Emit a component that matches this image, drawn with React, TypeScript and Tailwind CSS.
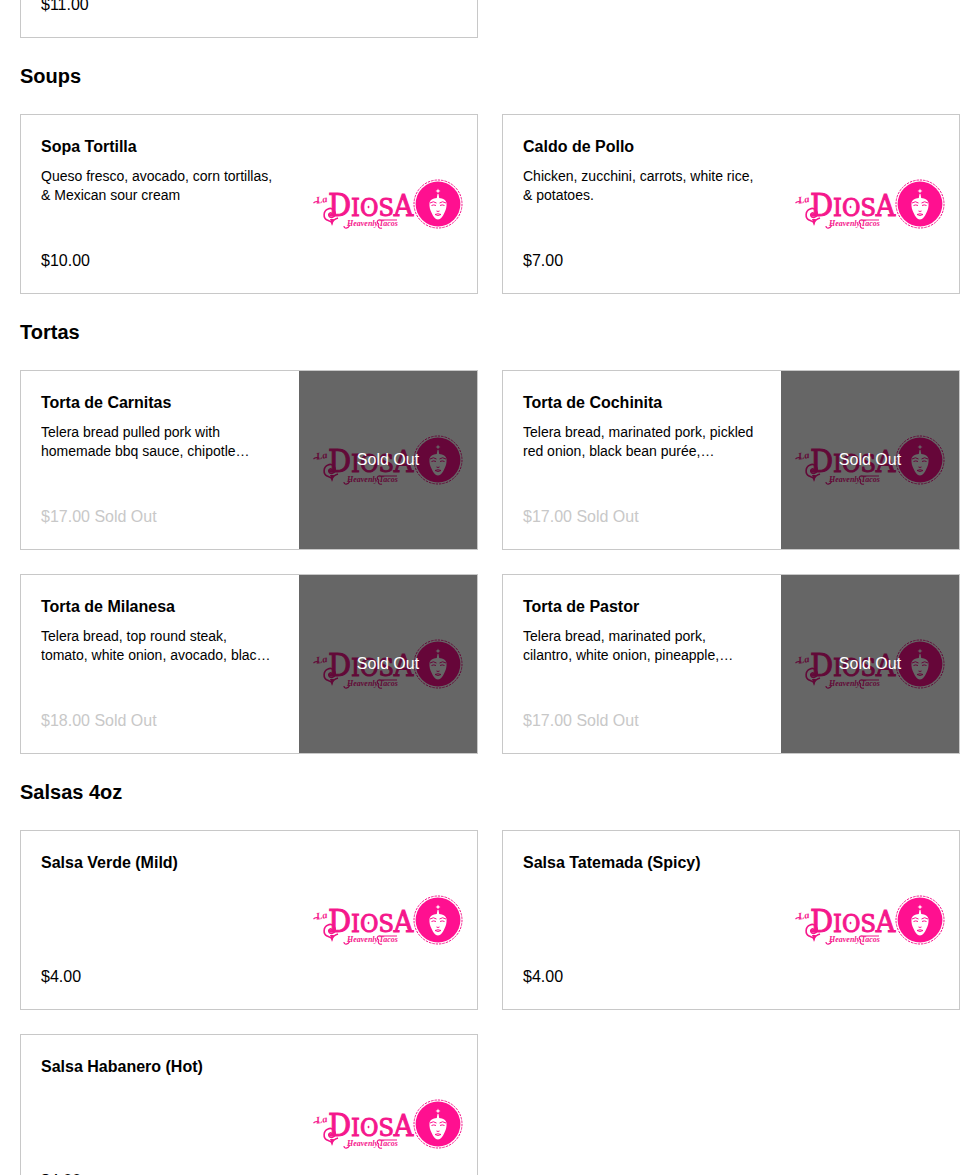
type MenuItem = {
  name: string;
  description?: string;
  price: string;
  soldOut?: boolean;
};

type MenuSection = {
  title: string;
  items: MenuItem[];
};

const sections: MenuSection[] = [
  {
    title: "Soups",
    items: [
      {
        name: "Sopa Tortilla",
        description: "Queso fresco, avocado, corn tortillas,\n& Mexican sour cream",
        price: "$10.00",
      },
      {
        name: "Caldo de Pollo",
        description: "Chicken, zucchini, carrots, white rice,\n& potatoes.",
        price: "$7.00",
      },
    ],
  },
  {
    title: "Tortas",
    items: [
      {
        name: "Torta de Carnitas",
        description: "Telera bread pulled pork with\nhomemade bbq sauce, chipotle…",
        price: "$17.00",
        soldOut: true,
      },
      {
        name: "Torta de Cochinita",
        description: "Telera bread, marinated pork, pickled\nred onion, black bean purée,…",
        price: "$17.00",
        soldOut: true,
      },
      {
        name: "Torta de Milanesa",
        description: "Telera bread, top round steak,\ntomato, white onion, avocado, blac…",
        price: "$18.00",
        soldOut: true,
      },
      {
        name: "Torta de Pastor",
        description: "Telera bread, marinated pork,\ncilantro, white onion, pineapple,…",
        price: "$17.00",
        soldOut: true,
      },
    ],
  },
  {
    title: "Salsas 4oz",
    items: [
      { name: "Salsa Verde (Mild)", price: "$4.00" },
      { name: "Salsa Tatemada (Spicy)", price: "$4.00" },
      { name: "Salsa Habanero (Hot)", price: "$4.00" },
    ],
  },
];

function DiosaLogo() {
  return (
    <svg
      viewBox="0 0 178 178"
      className="size-full"
      fill="#f5178c"
      role="img"
      aria-label="La Diosa Heavenly Tacos"
    >
      {/* La */}
      <g transform="rotate(-8 22 84)">
        <text
          x="17"
          y="88"
          fontSize="10"
          fontStyle="italic"
          fontWeight="bold"
          fontFamily="'Liberation Serif', serif"
        >
          La
        </text>
        <path d="M14 87c2-2 4-1 6 0" fill="none" stroke="#f5178c" strokeWidth="1.2" />
      </g>

      {/* Wordmark */}
      <text
        x="29"
        y="101"
        fontFamily="'DejaVu Serif Condensed', 'DejaVu Serif', serif"
        stroke="#f5178c"
        strokeWidth="1"
      >
        <tspan fontSize="32">D</tspan>
        <tspan fontSize="25">IOS</tspan>
        <tspan fontSize="30">A</tspan>
      </text>
      <path d="M69.5 90.5l1.2 1.5-1.2 1.5-1.2-1.5z" />

      {/* Curl under the D */}
      <path
        d="M33 99c-1-2-4-1-3 2 1 2 5 2 6-1 1-4-3-8-7-6-5 2-5 9-1 11 2 1 4 1 5 3 1-3 3-4 6-5"
        fill="none"
        stroke="#f5178c"
        strokeWidth="1.6"
      />
      <path d="M31 104l2 7 2-7z" />

      {/* Tagline */}
      <g
        fontSize="8"
        fontStyle="italic"
        fontWeight="bold"
        fontFamily="'Liberation Serif', serif"
      >
        <text x="48" y="111">Heavenly</text>
        <text x="80" y="111">Tacos</text>
      </g>
      <path
        d="M45 111c0 3 4 3 6-1M82 105h16M82 105c-4-1-5 3-2 4M80 109c-2 2 0 5 3 4"
        fill="none"
        stroke="#f5178c"
        strokeWidth="1.2"
      />

      {/* Medallion */}
      <circle
        cx="139"
        cy="89"
        r="24"
        fill="none"
        stroke="#f5178c"
        strokeWidth="1"
        strokeDasharray="2.4 1"
      />
      <circle cx="139" cy="89" r="22.4" fill="#ff1090" />
      <path d="M139 73.5l.7 1.8 1.8.7-1.8.7-.7 1.8-.7-1.8-1.8-.7 1.8-.7z" fill="#fff" />
      <path
        d="M138.5 79h1l.7 4c4 .3 6.8 2 7.3 5 .4 4-.7 7-2.2 10-1.5 3.5-3.5 6.5-6.3 6.5s-4.8-3-6.3-6.5c-1.5-3-2.6-6-2.2-10 .5-3 3.3-4.7 7.3-5z"
        fill="#fff"
      />
      <path
        d="M131 88q3.5-2.5 6.5 0M140.5 88q3-2.5 6.5 0M132.5 90.5q2.2-1.2 4.5 0M141 90.5q2.2-1.2 4.5 0M137.5 96q1.5 1 3 0M136 99.5q3-1.5 6 0q-3 2-6 0"
        fill="none"
        stroke="#ff1090"
        strokeWidth="1"
      />
    </svg>
  );
}

function ItemCard({ item }: { item: MenuItem }) {
  return (
    <li className="flex h-[180px] border border-[#c8c8c8] bg-white">
      <div className="flex min-w-0 flex-1 flex-col p-5">
        <h3 className="text-base font-bold">{item.name}</h3>
        {item.description && (
          <p className="mt-2 line-clamp-2 whitespace-pre-line text-sm leading-[19px]">
            {item.description}
          </p>
        )}
        <p className={`mt-auto text-base ${item.soldOut ? "text-[#c8c8c8]" : ""}`}>
          {item.price}
          {item.soldOut && " Sold Out"}
        </p>
      </div>
      <div className="relative aspect-square h-full shrink-0">
        <DiosaLogo />
        {item.soldOut && (
          <div className="absolute inset-0 flex items-center justify-center bg-black/60 text-base text-white">
            Sold Out
          </div>
        )}
      </div>
    </li>
  );
}

export default function App() {
  return (
    <main className="bg-white pl-5 pr-[5px] font-['Liberation_Sans',Arial,sans-serif] text-black">
      {/* Bottom edge of the previous section's last card */}
      <div className="grid grid-cols-2 gap-6">
        <div className="flex h-[38px] flex-col justify-end overflow-hidden border border-t-0 border-[#c8c8c8] px-5 pb-5">
          <p className="text-base">$11.00</p>
        </div>
      </div>

      {sections.map((section) => (
        <section key={section.title}>
          <h2 className="py-6 text-xl font-bold">{section.title}</h2>
          <ul className="grid grid-cols-2 gap-6">
            {section.items.map((item) => (
              <ItemCard key={item.name} item={item} />
            ))}
          </ul>
        </section>
      ))}
    </main>
  );
}
